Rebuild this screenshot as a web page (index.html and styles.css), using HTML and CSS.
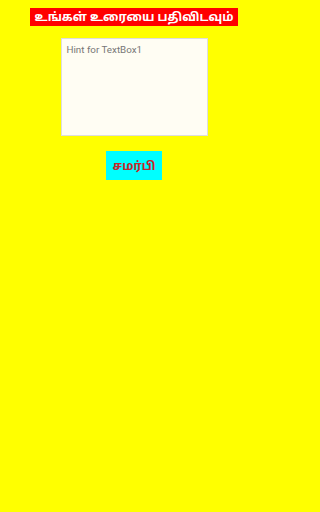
FILE: index.html
```html
<!DOCTYPE html>
<html lang="ta">
<head>
<meta charset="utf-8">
<link rel="stylesheet" href="styles.css">
</head>
<body>
<main class="screen">
  <h1 class="title">உங்கள் உரையை பதிவிடவும்</h1>
  <div class="textbox"><span class="hint">Hint for TextBox1</span></div>
  <button class="submit">சமர்பி</button>
</main>
</body>
</html>
```

FILE: styles.css
```css
html, body {
  margin: 0;
  padding: 0;
  background: #ffff00;
}
.screen {
  width: 268px;
  height: 512px;
  display: flex;
  flex-direction: column;
  align-items: center;
  background: #ffff00;
  font-family: "Noto Sans", "Noto Sans Tamil", "Lohit Tamil", sans-serif;
}
.title {
  margin: 8px 0 0 0;
  height: 18px;
  width: 208px;
  box-sizing: border-box;
  background: #ff0000;
  color: #ffffff;
  font-size: 12px;
  font-weight: bold;
  line-height: 18px;
  text-align: center;
  white-space: nowrap;
}
.textbox {
  margin-top: 12px;
  width: 147px;
  height: 98px;
  box-sizing: border-box;
  background: #fffdf3;
  border: 1px solid #dddddd;
  padding: 5px 5px;
}
.hint {
  display: block;
  font-family: Roboto, "Liberation Sans", sans-serif;
  font-size: 9.8px;
  line-height: 12px;
  color: #777777;
}
.submit {
  margin-top: 15px;
  width: 56px;
  height: 29px;
  padding: 0;
  border: none;
  background: #00ffff;
  color: #c8262a;
  font-family: "Noto Sans", "Noto Sans Tamil", sans-serif;
  font-size: 12px;
  font-weight: bold;
}
```
